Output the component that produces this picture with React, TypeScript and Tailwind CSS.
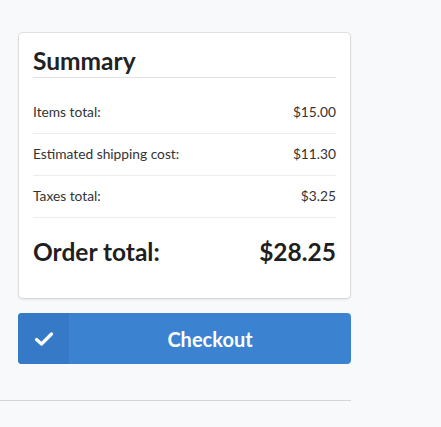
import React from "react";

const rows = [
  { label: "Items total:", value: "$15.00" },
  { label: "Estimated shipping cost:", value: "$11.30" },
  { label: "Taxes total:", value: "$3.25" },
];

export default function App() {
  return (
    <div
      className="w-[441px] h-[427px] bg-[#f8f9fb] text-[#222]"
      style={{ fontFamily: "Lato, 'Open Sans', sans-serif" }}
    >
      <div className="w-[351px] pt-[33px]">
        <div className="ml-[19px] w-[331px] bg-white rounded-[4px] shadow-[0_1px_3px_0_#d4d4d5,0_0_0_1px_#e2e2e3] px-[14px] pt-[11px] pb-[12px]">
          <div className="text-[24.5px] font-bold leading-[33px] text-[#222] border-b border-[#e0e0e0]">
            Summary
          </div>
          <div className="mt-[14px]">
            {rows.map((r) => (
              <div
                key={r.label}
                className="flex justify-between items-center h-[42px] border-b border-[#ececec] text-[13.75px] text-[#333]"
              >
                <span>{r.label}</span>
                <span>{r.value}</span>
              </div>
            ))}
          </div>
          <div className="flex justify-between items-center h-[68px] text-[24.5px] font-bold text-[#1f1f1f]">
            <span>Order total:</span>
            <span>$28.25</span>
          </div>
        </div>
        <button className="mt-[15px] ml-[18px] w-[333px] h-[51px] flex rounded-[4px] bg-[#3b83d0] text-white overflow-hidden">
          <span className="w-[51px] h-full flex items-center justify-center bg-[#3679c6]">
            <svg width="20" height="16" viewBox="0 0 20 16">
              <path d="M2.5 8.5 L7.5 13 L17.5 3" stroke="white" strokeWidth="3.2" fill="none" strokeLinecap="round" strokeLinejoin="round" />
            </svg>
          </span>
          <span className="flex-1 h-full flex items-center justify-center text-[20px] font-bold">
            Checkout
          </span>
        </button>
        <div className="mt-[36px] h-px bg-[#d4d4d5]" />
      </div>
    </div>
  );
}
